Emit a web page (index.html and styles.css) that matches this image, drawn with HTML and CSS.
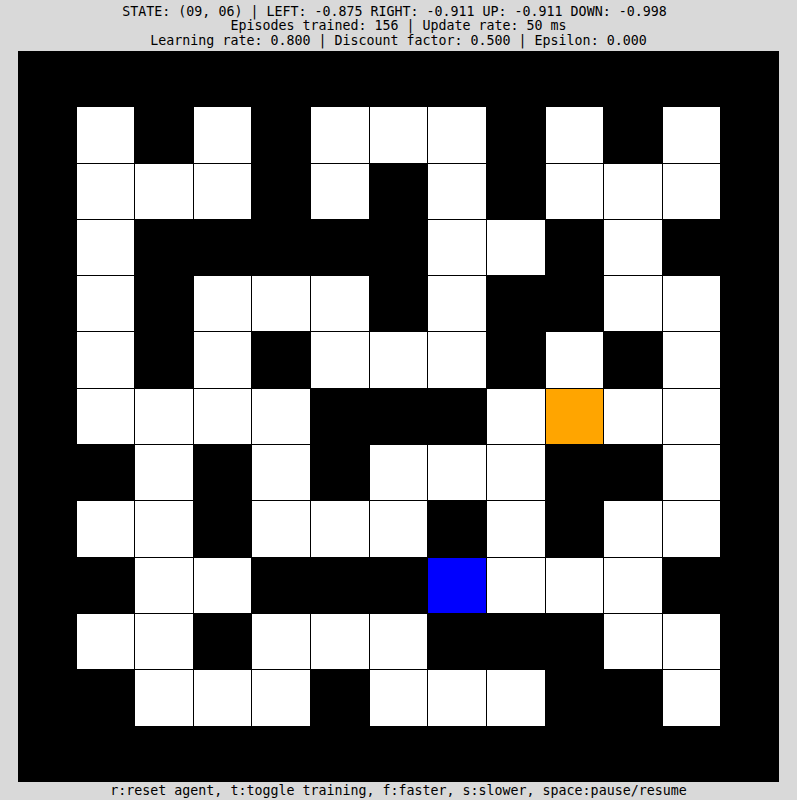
FILE: index.html
```html
<!DOCTYPE html>
<html>
<head>
<meta charset="utf-8">
<link rel="stylesheet" href="styles.css">
</head>
<body>
<div class="header">
<div class="line">STATE: (09, 06) | LEFT: -0.875 RIGHT: -0.911 UP: -0.911 DOWN: -0.998 </div>
<div class="line">Episodes trained: 156 | Update rate: 50 ms</div>
<div class="line">Learning rate: 0.800 | Discount factor: 0.500 | Epsilon: 0.000</div>
</div>
<div class="maze">
<div class="c b"></div><div class="c b"></div><div class="c b"></div><div class="c b"></div><div class="c b"></div><div class="c b"></div><div class="c b"></div><div class="c b"></div><div class="c b"></div><div class="c b"></div><div class="c b"></div><div class="c b"></div><div class="c b"></div>
<div class="c b"></div><div class="c w"></div><div class="c b"></div><div class="c w"></div><div class="c b"></div><div class="c w"></div><div class="c w"></div><div class="c w"></div><div class="c b"></div><div class="c w"></div><div class="c b"></div><div class="c w"></div><div class="c b"></div>
<div class="c b"></div><div class="c w"></div><div class="c w"></div><div class="c w"></div><div class="c b"></div><div class="c w"></div><div class="c b"></div><div class="c w"></div><div class="c b"></div><div class="c w"></div><div class="c w"></div><div class="c w"></div><div class="c b"></div>
<div class="c b"></div><div class="c w"></div><div class="c b"></div><div class="c b"></div><div class="c b"></div><div class="c b"></div><div class="c b"></div><div class="c w"></div><div class="c w"></div><div class="c b"></div><div class="c w"></div><div class="c b"></div><div class="c b"></div>
<div class="c b"></div><div class="c w"></div><div class="c b"></div><div class="c w"></div><div class="c w"></div><div class="c w"></div><div class="c b"></div><div class="c w"></div><div class="c b"></div><div class="c b"></div><div class="c w"></div><div class="c w"></div><div class="c b"></div>
<div class="c b"></div><div class="c w"></div><div class="c b"></div><div class="c w"></div><div class="c b"></div><div class="c w"></div><div class="c w"></div><div class="c w"></div><div class="c b"></div><div class="c w"></div><div class="c b"></div><div class="c w"></div><div class="c b"></div>
<div class="c b"></div><div class="c w"></div><div class="c w"></div><div class="c w"></div><div class="c w"></div><div class="c b"></div><div class="c b"></div><div class="c b"></div><div class="c w"></div><div class="c o"></div><div class="c w"></div><div class="c w"></div><div class="c b"></div>
<div class="c b"></div><div class="c b"></div><div class="c w"></div><div class="c b"></div><div class="c w"></div><div class="c b"></div><div class="c w"></div><div class="c w"></div><div class="c w"></div><div class="c b"></div><div class="c b"></div><div class="c w"></div><div class="c b"></div>
<div class="c b"></div><div class="c w"></div><div class="c w"></div><div class="c b"></div><div class="c w"></div><div class="c w"></div><div class="c w"></div><div class="c b"></div><div class="c w"></div><div class="c b"></div><div class="c w"></div><div class="c w"></div><div class="c b"></div>
<div class="c b"></div><div class="c b"></div><div class="c w"></div><div class="c w"></div><div class="c b"></div><div class="c b"></div><div class="c b"></div><div class="c u"></div><div class="c w"></div><div class="c w"></div><div class="c w"></div><div class="c b"></div><div class="c b"></div>
<div class="c b"></div><div class="c w"></div><div class="c w"></div><div class="c b"></div><div class="c w"></div><div class="c w"></div><div class="c w"></div><div class="c b"></div><div class="c b"></div><div class="c b"></div><div class="c w"></div><div class="c w"></div><div class="c b"></div>
<div class="c b"></div><div class="c b"></div><div class="c w"></div><div class="c w"></div><div class="c w"></div><div class="c b"></div><div class="c w"></div><div class="c w"></div><div class="c w"></div><div class="c b"></div><div class="c b"></div><div class="c w"></div><div class="c b"></div>
<div class="c b"></div><div class="c b"></div><div class="c b"></div><div class="c b"></div><div class="c b"></div><div class="c b"></div><div class="c b"></div><div class="c b"></div><div class="c b"></div><div class="c b"></div><div class="c b"></div><div class="c b"></div><div class="c b"></div>
</div>
<div class="footer">r:reset agent, t:toggle training, f:faster, s:slower, space:pause/resume</div>
</body>
</html>
```

FILE: styles.css
```css
html, body {
  margin: 0;
  padding: 0;
  background: #d9d9d9;
}
body {
  width: 797px;
  height: 800px;
  overflow: hidden;
  font-family: "DejaVu Sans Mono", monospace;
  font-size: 13.3px;
  color: #000;
}
.header {
  padding-top: 4.8px;
  text-align: center;
}
.line {
  line-height: 14.7px;
  height: 14.7px;
  white-space: pre;
}
.maze {
  margin: 2.1px auto 0;
  width: 761px;
  height: 731px;
  background: #000;
  display: grid;
  grid-template-columns: repeat(13, 1fr);
  grid-template-rows: repeat(13, 1fr);
  gap: 1px;
}
.c { min-width: 0; min-height: 0; }
.b { background: #000; }
.w { background: #fff; }
.o { background: #ffa500; }
.u { background: #0000ff; }
.footer {
  text-align: center;
  line-height: 17px;
  white-space: pre;
}
```
